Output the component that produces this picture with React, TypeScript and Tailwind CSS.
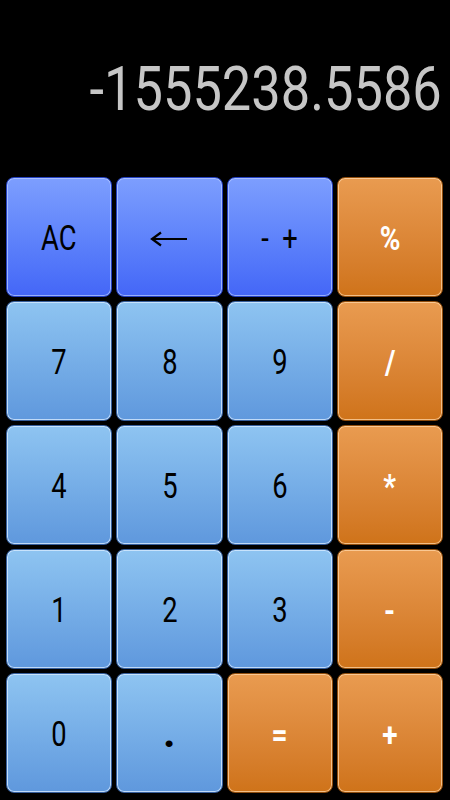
import React from 'react'

type Kind = 'func' | 'num' | 'op'

const keys: { label: string; kind: Kind }[] = [
  { label: 'AC', kind: 'func' },
  { label: 'back', kind: 'func' },
  { label: '- +', kind: 'func' },
  { label: '%', kind: 'op' },
  { label: '7', kind: 'num' },
  { label: '8', kind: 'num' },
  { label: '9', kind: 'num' },
  { label: '/', kind: 'op' },
  { label: '4', kind: 'num' },
  { label: '5', kind: 'num' },
  { label: '6', kind: 'num' },
  { label: '*', kind: 'op' },
  { label: '1', kind: 'num' },
  { label: '2', kind: 'num' },
  { label: '3', kind: 'num' },
  { label: '-', kind: 'op' },
  { label: '0', kind: 'num' },
  { label: '.', kind: 'num' },
  { label: '=', kind: 'op' },
  { label: '+', kind: 'op' },
]

const kindClass: Record<Kind, string> = {
  func: 'bg-linear-to-b from-[#7d9efe] to-[#4466f7] border-[#2541c0] shadow-[inset_0_0_0_1px_rgba(180,200,255,0.75)] text-black',
  num: 'bg-linear-to-b from-[#8ec4f1] to-[#5f98dd] border-[#375f9c] shadow-[inset_0_0_0_1px_rgba(215,235,255,0.8)] text-black',
  op: 'bg-linear-to-b from-[#e99b50] to-[#cf7319] border-[#8f4d0d] shadow-[inset_0_0_0_1px_rgba(255,215,170,0.75)] text-white',
}

function BackArrow() {
  return (
    <svg width="38" height="16" viewBox="0 0 38 16" className="mt-[4px]">
      <path d="M2 8 H37" stroke="black" strokeWidth="2.2" fill="none" />
      <path d="M11 1.5 L2 8 L11 14.5" stroke="black" strokeWidth="2.2" fill="none" strokeLinejoin="miter" />
    </svg>
  )
}

function Key({ label, kind }: { label: string; kind: Kind }) {
  return (
    <button
      className={`flex items-center justify-center rounded-[8px] border ${kindClass[kind]}`}
    >
      {label === 'back' ? (
        <BackArrow />
      ) : kind === 'op' ? (
        <span className="mt-[2px] inline-block scale-x-[0.85] text-[33px] font-bold leading-none">{label}</span>
      ) : label === '.' ? (
        <span className="mt-[2px] inline-block text-[38px] font-black leading-none">.</span>
      ) : (
        <span className="mt-[3px] inline-block scale-x-[0.78] whitespace-pre text-[35px] leading-none">{label === '- +' ? '-  +' : label}</span>
      )}
    </button>
  )
}

export default function App() {
  return (
    <div
      className="flex h-[800px] w-[450px] flex-col bg-black"
      style={{ fontFamily: 'Roboto, "Liberation Sans", sans-serif' }}
    >
      <div className="flex h-[177px] items-start justify-end pr-[8px] pt-[58px]">
        <span className="inline-block origin-right scale-x-[0.845] text-[62px] leading-none text-[#c6c6c6]">
          -1555238.5586
        </span>
      </div>
      <div className="grid flex-1 grid-cols-4 grid-rows-5 gap-[4px] pb-[7px] pl-[6px] pr-[7px]">
        {keys.map((k) => (
          <Key key={k.label} label={k.label} kind={k.kind} />
        ))}
      </div>
    </div>
  )
}
